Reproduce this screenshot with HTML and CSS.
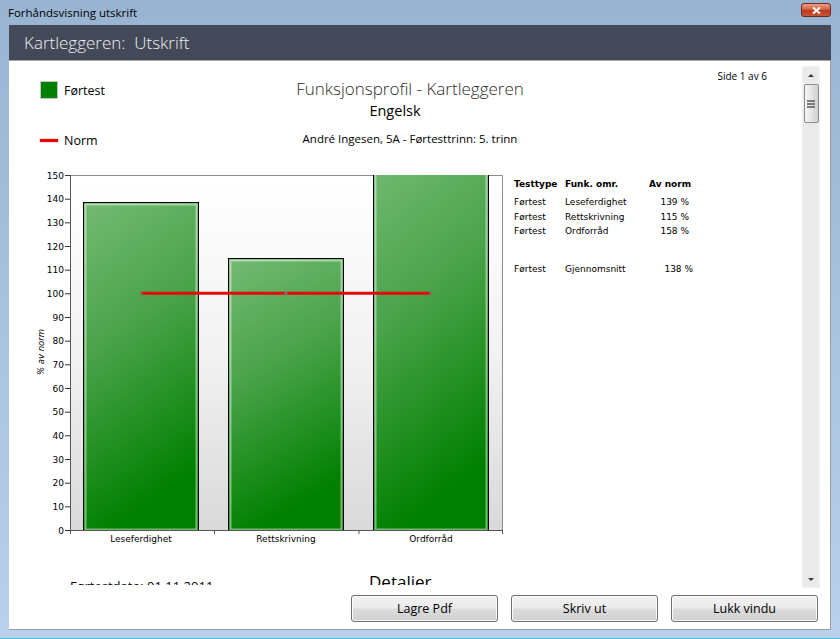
FILE: index.html
```html
<!DOCTYPE html>
<html lang="no">
<head>
<meta charset="utf-8">
<title>Forhåndsvisning utskrift</title>
<link rel="stylesheet" href="styles.css">
</head>
<body>
<div class="window">
  <div class="titlebar">
    <span class="wtitle">Forhåndsvisning utskrift</span>
    <span class="close"><svg width="9" height="7" viewBox="0 0 9 7"><path d="M1 0.5 L8 6.5 M8 0.5 L1 6.5" stroke="#fff" stroke-width="2"/></svg></span>
  </div>
  <div class="client">
    <div class="apphead">Kartleggeren:&nbsp; Utskrift</div>
    <div class="content">
      <div class="viewer">
        <div class="page">
          <div class="page-head">
            <div class="legend">
              <div class="legend-item"><span class="sw-bar"></span><span>Førtest</span></div>
              <div class="legend-item norm"><span class="sw-line"></span><span>Norm</span></div>
            </div>
            <div class="titles">
              <div class="t-main">Funksjonsprofil - Kartleggeren</div>
              <div class="t-sub">Engelsk</div>
              <div class="t-who">André Ingesen, 5A - Førtesttrinn: 5. trinn</div>
            </div>
            <div class="pageno">Side 1 av 6</div>
          </div>
          <div class="page-body">
            <svg class="chart" width="501" height="385" viewBox="0 0 501 385">
              <defs>
                <linearGradient id="plotbg" x1="0" y1="0" x2="0" y2="1">
                  <stop offset="0" stop-color="#ffffff"/>
                  <stop offset="0.5" stop-color="#f2f2f2"/>
                  <stop offset="1" stop-color="#d9d9d9"/>
                </linearGradient>
                <linearGradient id="barfill" x1="0" y1="0" x2="0.25" y2="1">
                  <stop offset="0" stop-color="#74ba74"/>
                  <stop offset="0.45" stop-color="#4aa34a"/>
                  <stop offset="1" stop-color="#008000"/>
                </linearGradient>
                <clipPath id="plotclip"><rect x="61" y="10" width="433" height="355"/></clipPath>
              </defs>
              <rect x="61" y="10" width="433" height="355" fill="url(#plotbg)"/>
              <path d="M61 10.5 H493.5 V365" fill="none" stroke="#8c8c8c" stroke-width="1"/>
              <g clip-path="url(#plotclip)">
                <rect x="74.5" y="37.5" width="115" height="328" fill="url(#barfill)" stroke="#000" stroke-width="1"/>
                <rect x="76.5" y="39.5" width="111" height="325" fill="none" stroke="#ffffff" stroke-opacity="0.45" stroke-width="2"/>
                <rect x="219.5" y="93.5" width="115" height="272" fill="url(#barfill)" stroke="#000" stroke-width="1"/>
                <rect x="221.5" y="95.5" width="111" height="269" fill="none" stroke="#ffffff" stroke-opacity="0.45" stroke-width="2"/>
                <rect x="364.5" y="-9.5" width="115" height="375" fill="url(#barfill)" stroke="#000" stroke-width="1"/>
                <rect x="366.5" y="-7.5" width="111" height="372" fill="none" stroke="#ffffff" stroke-opacity="0.45" stroke-width="2"/>
              </g>
              <line x1="132" y1="128.3" x2="421.7" y2="128.3" stroke="#e20a0a" stroke-width="3"/>
              <rect x="130.5" y="126.8" width="3" height="3" fill="#8a6a70"/>
              <rect x="275.5" y="126.8" width="3" height="3" fill="#8a6a70"/>
              <rect x="420.2" y="126.8" width="3" height="3" fill="#8a6a70"/>
              <path d="M61.5 10 V369 M61 365.5 H494 M205.5 365 V369 M350 365 V369 M493.5 365 V369" fill="none" stroke="#555" stroke-width="1"/>
              <path d="M56 365.5H61 M56 341.8H61 M56 318.2H61 M56 294.5H61 M56 270.8H61 M56 247.2H61 M56 223.5H61 M56 199.8H61 M56 176.2H61 M56 152.5H61 M56 128.8H61 M56 105.2H61 M56 81.5H61 M56 57.8H61 M56 34.2H61 M56 10.5H61" fill="none" stroke="#333" stroke-width="1"/>
              <g class="ylabels" text-anchor="end">
                <text x="55" y="368.5">0</text>
                <text x="55" y="344.8">10</text>
                <text x="55" y="321.2">20</text>
                <text x="55" y="297.5">30</text>
                <text x="55" y="273.8">40</text>
                <text x="55" y="250.2">50</text>
                <text x="55" y="226.5">60</text>
                <text x="55" y="202.8">70</text>
                <text x="55" y="179.2">80</text>
                <text x="55" y="155.5">90</text>
                <text x="55" y="131.8">100</text>
                <text x="55" y="108.2">110</text>
                <text x="55" y="84.5">120</text>
                <text x="55" y="60.8">130</text>
                <text x="55" y="37.2">140</text>
                <text x="55" y="13.5">150</text>
              </g>
              <g class="xlabels" text-anchor="middle">
                <text x="132" y="376.5">Leseferdighet</text>
                <text x="277" y="376.5">Rettskrivning</text>
                <text x="422" y="376.5">Ordforråd</text>
              </g>
              <text class="ytitle" x="32" y="190" text-anchor="middle" transform="rotate(-90 32 187)">% av norm</text>
            </svg>
            <div class="stats">
              <span class="h">Testtype</span><span class="h">Funk. omr.</span><span class="h">Av norm</span>
              <span>Førtest</span><span>Leseferdighet</span><span class="val">139 %</span>
              <span>Førtest</span><span>Rettskrivning</span><span class="val">115 %</span>
              <span>Førtest</span><span>Ordforråd</span><span class="val">158 %</span>
              <span class="avg">Førtest</span><span class="avg">Gjennomsnitt</span><span class="avg val last">138 %</span>
            </div>
          </div>
          <div class="page-foot">
            <span class="date">Førtestdato: 01.11.2011</span>
            <span class="details">Detaljer</span>
          </div>
        </div>
        <div class="vscroll">
          <div class="sbtn"><span class="arr up"></span></div>
          <div class="thumb"><span class="grip"></span><span class="grip"></span><span class="grip"></span></div>
          <div class="sfill"></div>
          <div class="sbtn"><span class="arr down"></span></div>
        </div>
      </div>
      <div class="buttons">
        <button class="btn">Lagre Pdf</button>
        <button class="btn">Skriv ut</button>
        <button class="btn">Lukk vindu</button>
      </div>
    </div>
  </div>
</div>
</body>
</html>
```

FILE: styles.css
```css
html, body {
  margin: 0;
  padding: 0;
  height: 639px;
  overflow: hidden;
}
body {
  background: linear-gradient(#99b4d1, #b9d1ea);
  font-family: "Open Sans", "Noto Sans", sans-serif;
  color: #000;
}
.window {
  height: 639px;
  box-sizing: border-box;
  border-bottom: 1px solid #3cc6e2;
  display: flex;
  flex-direction: column;
}
.titlebar {
  height: 25px;
  display: flex;
  justify-content: space-between;
  align-items: flex-start;
  padding: 0 9px 0 8px;
}
.wtitle {
  font-size: 11.5px;
  line-height: 26px;
}
.close {
  margin-top: 3px;
  width: 30px;
  height: 14px;
  box-sizing: border-box;
  border: 1px solid #6b2a20;
  border-radius: 3px;
  background: linear-gradient(#e6a08e, #d4603f 45%, #b9391f 55%, #c8563a);
  display: flex;
  align-items: center;
  justify-content: center;
}
.client {
  margin-left: 9px;
  width: 822px;
}
.apphead {
  height: 35px;
  background: #434959;
  color: #f0f0f0;
  font-size: 17px;
  font-weight: 300;
  line-height: 35px;
  padding-left: 15px;
  box-sizing: border-box;
}
.content {
  background: #fff;
  border-top: 1px solid #a7a7a7;
  border-right: 1px solid #9c9c9c;
  border-bottom: 1px solid #9c9c9c;
  height: 568px;
}
.viewer {
  display: flex;
  height: 527px;
}
.page {
  width: 792px;
  height: 524px;
  overflow: hidden;
}
.page-head {
  display: flex;
  height: 104px;
}
.legend {
  margin-left: 31px;
  width: 220px;
  padding-top: 20px;
}
.legend-item {
  display: flex;
  align-items: center;
  gap: 6px;
  height: 18px;
  font-size: 12.5px;
}
.legend-item.norm {
  margin-top: 32px;
}
.sw-bar {
  width: 18px;
  height: 18px;
  box-sizing: border-box;
  background: #008000;
  border: 1px solid #c6c6c6;
}
.sw-line {
  width: 18px;
  height: 3px;
  background: #f00000;
  box-shadow: 0 0 0 1px #e4e4e4;
}
.titles {
  width: 300px;
  padding-top: 16px;
  text-align: center;
}
.t-main {
  font-size: 17px;
  font-weight: 300;
  line-height: 24px;
  color: #2b2b2b;
}
.t-sub {
  font-size: 14.5px;
  line-height: 20px;
  padding-right: 30px;
}
.t-who {
  margin-top: 10px;
  font-size: 11.5px;
  line-height: 16px;
}
.pageno {
  margin-left: auto;
  margin-right: 34px;
  padding-top: 9px;
  font-size: 10px;
  line-height: 13px;
}
.page-body {
  display: flex;
  align-items: flex-start;
  height: 385px;
}
.chart {
  display: block;
  font-family: "DejaVu Sans", sans-serif;
  font-size: 9px;
}
.chart text {
  fill: #000;
}
.chart .ytitle {
  font-style: italic;
  font-size: 8.5px;
}
.stats {
  margin: 12px 0 0 4px;
  display: grid;
  grid-template-columns: 51px 84px 56px;
  font-family: "DejaVu Sans", sans-serif;
  font-size: 9px;
  line-height: 14.3px;
  white-space: nowrap;
}
.stats .h {
  font-weight: bold;
  margin-bottom: 4px;
}
.stats .val {
  text-align: right;
  padding-right: 16px;
}
.stats .avg {
  margin-top: 23.7px;
}
.stats .val.last {
  padding-right: 12px;
}
.page-foot {
  display: grid;
  grid-template-columns: 299px auto;
  align-items: start;
  padding-left: 61px;
  margin-top: 21px;
}
.date {
  font-size: 13px;
  line-height: 22px;
  padding-top: 4px;
}
.details {
  font-size: 17px;
  line-height: 22px;
}
.vscroll {
  margin: 5px 0 0 1px;
  width: 18px;
  height: 522px;
  box-sizing: border-box;
  background: #eaeaea;
  border: 1px solid #f2f2f2;
  display: flex;
  flex-direction: column;
  align-items: center;
}
.sbtn {
  height: 16px;
  width: 100%;
  display: flex;
  align-items: center;
  justify-content: center;
}
.arr {
  width: 0;
  height: 0;
  border-left: 3px solid transparent;
  border-right: 3px solid transparent;
}
.arr.up {
  border-bottom: 3px solid #3a3a3a;
}
.arr.down {
  border-top: 3px solid #3a3a3a;
}
.thumb {
  margin-top: 1px;
  width: 15px;
  height: 39px;
  box-sizing: border-box;
  border: 1px solid #8e8e8e;
  border-radius: 2px;
  background: linear-gradient(90deg, #f6f6f6, #e4e4e4 50%, #cfcfcf);
  display: flex;
  flex-direction: column;
  align-items: center;
  justify-content: center;
  gap: 1px;
}
.grip {
  width: 8px;
  height: 2px;
  background: #7a7a7a;
}
.sfill {
  flex: 1;
}
.buttons {
  display: flex;
  justify-content: flex-end;
  gap: 13px;
  padding: 7px 12px 0 0;
}
.btn {
  width: 147px;
  height: 27px;
  box-sizing: border-box;
  border: 1px solid #707070;
  border-radius: 3px;
  background: linear-gradient(#f2f2f2, #ebebeb 48%, #dddddd 52%, #cfcfcf);
  box-shadow: inset 0 0 0 1px #fbfbfb;
  font-family: "Open Sans", "Noto Sans", sans-serif;
  font-size: 12.5px;
  color: #000;
  padding: 0;
}
```
